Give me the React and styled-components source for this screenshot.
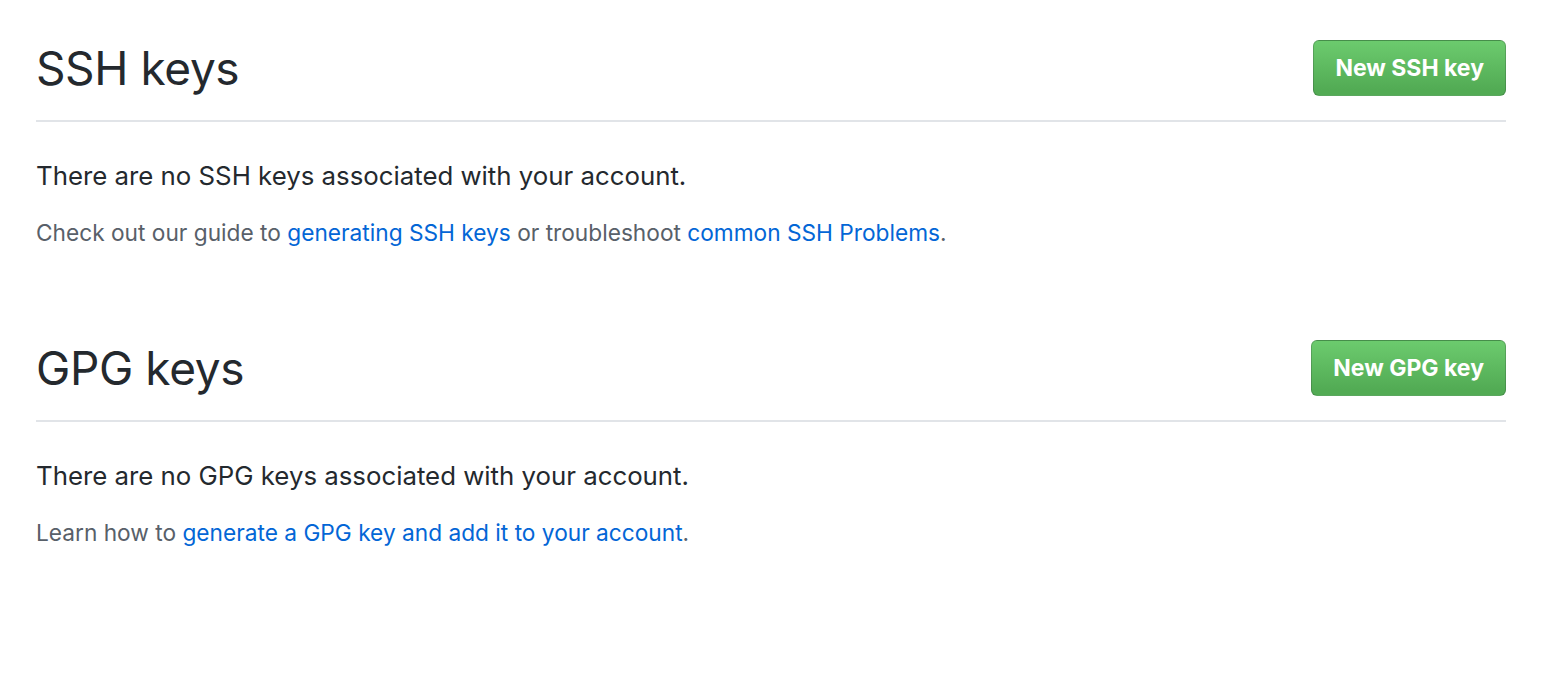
import React from 'react'
import styled, { createGlobalStyle } from 'styled-components'

const GlobalStyle = createGlobalStyle`
  html, body {
    margin: 0;
    padding: 0;
    background: #fff;
  }

  body {
    font-family: Inter, "Liberation Sans", Arial, sans-serif;
    color: #24292e;
  }
`

const Page = styled.main`
  padding: 38px 54px 0 36px;
`

const Section = styled.section`
  margin-bottom: 88px;
`

const Subhead = styled.div`
  display: flex;
  align-items: center;
  justify-content: space-between;
  padding-bottom: 22px;
  border-bottom: 2px solid #e1e4e8;
`

const Heading = styled.h2`
  margin: 0;
  font-size: 46px;
  font-weight: 400;
  line-height: 60px;
  letter-spacing: -0.4px;
  color: #24292e;
`

const PrimaryButton = styled.button`
  height: 56px;
  padding: 0 21px;
  border: 1px solid rgba(27, 31, 35, 0.2);
  border-radius: 6px;
  background-image: linear-gradient(-180deg, #6ccb6e 0%, #52ab54 90%);
  color: #fff;
  font-family: inherit;
  font-size: 23px;
  font-weight: 700;
  cursor: pointer;
`

const Lead = styled.p`
  margin: 36px 0 0;
  font-size: 25.8px;
  line-height: 36px;
  color: #24292e;
`

const Note = styled.p`
  margin: 22px 0 0;
  font-size: 22.7px;
  line-height: 34px;
  color: #586069;
`

const TextLink = styled.a`
  color: #0366d6;
  text-decoration: none;

  &:hover {
    text-decoration: underline;
  }
`

const App = () => (
  <>
    <GlobalStyle />
    <Page>
      <Section>
        <Subhead>
          <Heading>SSH keys</Heading>
          <PrimaryButton>New SSH key</PrimaryButton>
        </Subhead>
        <Lead>There are no SSH keys associated with your account.</Lead>
        <Note>
          Check out our guide to <TextLink href="#">generating SSH keys</TextLink> or
          troubleshoot <TextLink href="#">common SSH Problems</TextLink>.
        </Note>
      </Section>
      <Section>
        <Subhead>
          <Heading>GPG keys</Heading>
          <PrimaryButton>New GPG key</PrimaryButton>
        </Subhead>
        <Lead>There are no GPG keys associated with your account.</Lead>
        <Note>
          Learn how to{' '}
          <TextLink href="#">generate a GPG key and add it to your account</TextLink>.
        </Note>
      </Section>
    </Page>
  </>
)

export default App
